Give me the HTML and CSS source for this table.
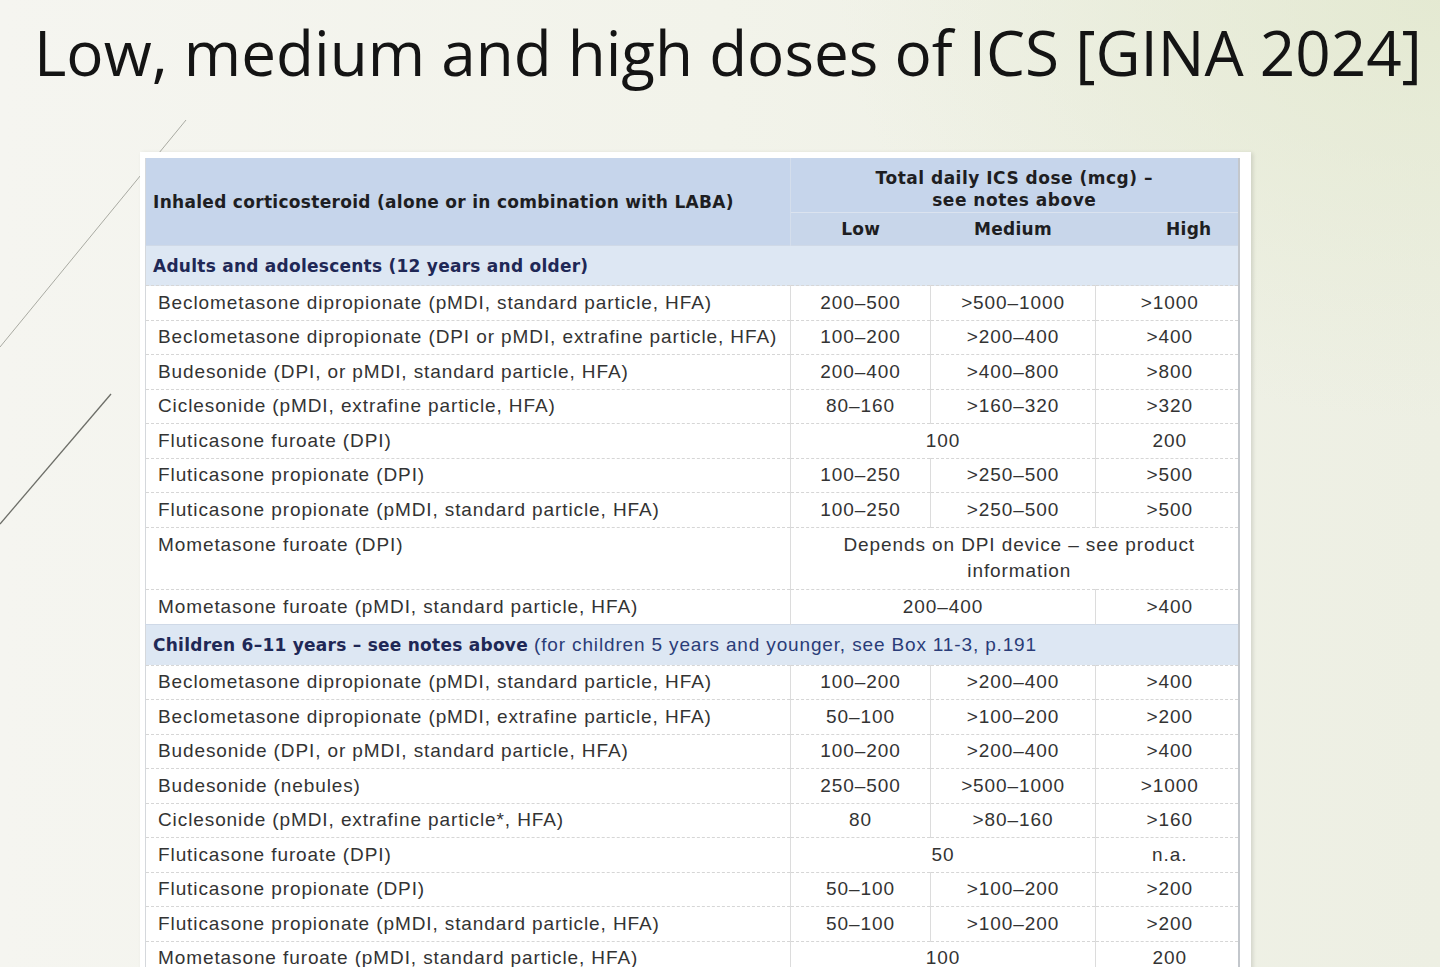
FILE: index.html
```html
<!DOCTYPE html>
<html>
<head>
<meta charset="utf-8">
<link rel="stylesheet" href="styles.css">
</head>
<body>
<svg class="deco" width="200" height="560" viewBox="0 0 200 560">
  <line x1="0" y1="347" x2="186" y2="120" stroke="#a9aaa2" stroke-width="1"/>
  <line x1="0" y1="524" x2="111" y2="394" stroke="#6d6e68" stroke-width="1.3"/>
</svg>
<h1 class="title">Low, medium and high doses of ICS [GINA 2024]</h1>
<div class="frame">
<table class="ics">
  <colgroup>
    <col class="c-name"><col class="c-low"><col class="c-med"><col class="c-high">
  </colgroup>
  <thead>
    <tr class="h1">
      <th rowspan="2" class="hname">Inhaled corticosteroid (alone or in combination with LABA)</th>
      <th colspan="3" class="htot">Total daily ICS dose (mcg) –<br>see notes above</th>
    </tr>
    <tr class="h2">
      <th>Low</th><th>Medium</th><th class="hh">High</th>
    </tr>
  </thead>
  <tbody>
    <tr class="sec"><td colspan="4"><b>Adults and adolescents (12 years and older)</b></td></tr>
    <tr><td>Beclometasone dipropionate (pMDI, standard particle, HFA)</td><td>200–500</td><td>&gt;500–1000</td><td>&gt;1000</td></tr>
    <tr><td>Beclometasone dipropionate (DPI or pMDI, extrafine particle, HFA)</td><td>100–200</td><td>&gt;200–400</td><td>&gt;400</td></tr>
    <tr><td>Budesonide (DPI, or pMDI, standard particle, HFA)</td><td>200–400</td><td>&gt;400–800</td><td>&gt;800</td></tr>
    <tr><td>Ciclesonide (pMDI, extrafine particle, HFA)</td><td>80–160</td><td>&gt;160–320</td><td>&gt;320</td></tr>
    <tr><td>Fluticasone furoate (DPI)</td><td colspan="2">100</td><td>200</td></tr>
    <tr><td>Fluticasone propionate (DPI)</td><td>100–250</td><td>&gt;250–500</td><td>&gt;500</td></tr>
    <tr><td>Fluticasone propionate (pMDI, standard particle, HFA)</td><td>100–250</td><td>&gt;250–500</td><td>&gt;500</td></tr>
    <tr class="tall"><td>Mometasone furoate (DPI)</td><td colspan="3">Depends on DPI device – see product information</td></tr>
    <tr><td>Mometasone furoate (pMDI, standard particle, HFA)</td><td colspan="2">200–400</td><td>&gt;400</td></tr>
    <tr class="sec sec2"><td colspan="4"><b>Children 6–11 years – see notes above</b> (for children 5 years and younger, see Box 11-3, p.191</td></tr>
    <tr><td>Beclometasone dipropionate (pMDI, standard particle, HFA)</td><td>100–200</td><td>&gt;200–400</td><td>&gt;400</td></tr>
    <tr><td>Beclometasone dipropionate (pMDI, extrafine particle, HFA)</td><td>50–100</td><td>&gt;100–200</td><td>&gt;200</td></tr>
    <tr><td>Budesonide (DPI, or pMDI, standard particle, HFA)</td><td>100–200</td><td>&gt;200–400</td><td>&gt;400</td></tr>
    <tr><td>Budesonide (nebules)</td><td>250–500</td><td>&gt;500–1000</td><td>&gt;1000</td></tr>
    <tr><td>Ciclesonide (pMDI, extrafine particle*, HFA)</td><td>80</td><td>&gt;80–160</td><td>&gt;160</td></tr>
    <tr><td>Fluticasone furoate (DPI)</td><td colspan="2">50</td><td>n.a.</td></tr>
    <tr><td>Fluticasone propionate (DPI)</td><td>50–100</td><td>&gt;100–200</td><td>&gt;200</td></tr>
    <tr><td>Fluticasone propionate (pMDI, standard particle, HFA)</td><td>50–100</td><td>&gt;100–200</td><td>&gt;200</td></tr>
    <tr><td>Mometasone furoate (pMDI, standard particle, HFA)</td><td colspan="2">100</td><td>200</td></tr>
  </tbody>
</table>
</div>
</body>
</html>
```

FILE: styles.css
```css
html, body {
  margin: 0;
  padding: 0;
}
body {
  width: 1440px;
  height: 967px;
  overflow: hidden;
  position: relative;
  font-family: "Liberation Sans", Arial, sans-serif;
  background:
    radial-gradient(ellipse 600px 420px at 1440px 0px, rgba(226, 232, 206, 0.8), rgba(226, 232, 206, 0) 100%),
    linear-gradient(90deg, #f5f5f0 0%, #f2f3ea 50%, #edefe3 100%);
}
.deco {
  position: absolute;
  left: 0;
  top: 0;
}
.title {
  margin: 0;
  padding: 16px 0 0 34px;
  height: 132px;
  box-sizing: border-box;
  font-family: "Open Sans", sans-serif;
  font-weight: 400;
  font-size: 62px;
  line-height: 72px;
  color: #141414;
  white-space: nowrap;
}
.frame {
  position: relative;
  margin: 20px 0 0 140px;
  width: 1098px;
  padding: 6px 8px 0 5px;
  background: #fff;
  box-shadow: 2px 1px 4px rgba(0, 0, 0, 0.12);
}
.ics {
  border-collapse: collapse;
  table-layout: fixed;
  width: 1093px;
  color: #333;
  font-size: 19px;
  letter-spacing: 0.9px;
  border-right: 2px solid #c3c7cc;
  border-left: 1px solid #d5d8dc;
}
.c-name { width: 645px; }
.c-low { width: 140px; }
.c-med { width: 165px; }
.c-high { width: 143px; }

.ics th {
  background: #c6d5eb;
  color: #1e1e22;
  font-family: "DejaVu Sans", Verdana, sans-serif;
  font-weight: 700;
  font-size: 17px;
  letter-spacing: 0.3px;
  padding: 0;
}
.ics .h1 th { height: 54px; }
.ics .h2 th {
  height: 32px;
  background: #c8d6ea;
  border-top: 1px solid #dbe3ef;
}
.ics .h1 .hname {
  text-align: left;
  padding-left: 7px;
  border-right: 1px solid #d4deec;
}
.ics .h1 .htot {
  line-height: 22px;
  padding-top: 8px;
  height: 46px;
  letter-spacing: 0.5px;
}
.ics .hh { text-align: right; padding-right: 26px; }

.ics td {
  height: 33.5px;
  padding: 0 4px;
  text-align: center;
  border-top: 1px dashed #d6d6d6;
  border-left: 1px solid #dcdcdc;
  line-height: 26px;
}
.ics td:first-child {
  text-align: left;
  padding-left: 12px;
  border-left: none;
}
.ics td:last-child { padding-left: 10px; }
.ics td[colspan="3"] { padding-left: 40px; padding-right: 30px; }
.ics .tall td {
  height: 57.5px;
  vertical-align: top;
  padding-top: 4px;
}

.ics .sec td {
  background: #dde7f3;
  color: #2a3c78;
  height: 39px;
  padding-left: 7px;
  border-top: 1px solid #cfd9e7;
  text-align: left;
  letter-spacing: 0.85px;
  font-size: 19px;
}
.ics .sec td b {
  font-family: "DejaVu Sans", Verdana, sans-serif;
  font-size: 17px;
  letter-spacing: 0.25px;
  color: #1f2856;
}
.ics .sec2 td { height: 40px; }
```
